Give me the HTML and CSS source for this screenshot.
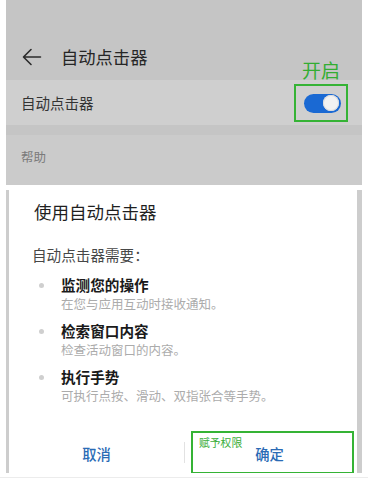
FILE: index.html
```html
<!DOCTYPE html>
<html lang="zh-CN">
<head>
<meta charset="utf-8">
<link rel="stylesheet" href="styles.css">
</head>
<body>
<div class="screen">
  <div class="appbar">
    <svg class="back" width="20" height="18" viewBox="0 0 20 18">
      <path d="M18.5 9H2M9 1.5L1.5 9L9 16.5" fill="none" stroke="#2b2b2b" stroke-width="1.6" stroke-linecap="round" stroke-linejoin="round"/>
    </svg>
    <span class="apptitle">自动点击器</span>
  </div>
  <div class="row">
    <span class="rowtext">自动点击器</span>
    <div class="mark">
      <span class="mark-label">开启</span>
      <div class="toggle"><div class="knob"></div></div>
    </div>
  </div>
  <div class="gap"></div>
  <div class="help">帮助</div>
</div>
<div class="dialog">
  <div class="dtitle">使用自动点击器</div>
  <div class="dbody">自动点击器需要：</div>
  <div class="items">
    <div class="item">
      <div class="dotcell"><span class="dot"></span></div>
      <div class="itext">
        <div class="ititle">监测您的操作</div>
        <div class="isub">在您与应用互动时接收通知。</div>
      </div>
    </div>
    <div class="item">
      <div class="dotcell"><span class="dot"></span></div>
      <div class="itext">
        <div class="ititle">检索窗口内容</div>
        <div class="isub">检查活动窗口的内容。</div>
      </div>
    </div>
    <div class="item">
      <div class="dotcell"><span class="dot"></span></div>
      <div class="itext">
        <div class="ititle">执行手势</div>
        <div class="isub">可执行点按、滑动、双指张合等手势。</div>
      </div>
    </div>
  </div>
  <div class="buttons">
    <div class="btn">取消</div>
    <div class="divider"></div>
    <div class="btn ok">
      <div class="okmark"><span class="okmark-label">赋予权限</span></div>
      确定
    </div>
  </div>
</div>
<div class="footline"></div>
</body>
</html>
```

FILE: styles.css
```css
* { box-sizing: border-box; }
html, body { margin: 0; padding: 0; }
body {
  width: 368px;
  height: 480px;
  background: #ffffff;
  font-family: "Noto Sans CJK SC", "Noto Sans", sans-serif;
  overflow: hidden;
}
.screen {
  margin: 0 6px;
}
.appbar {
  height: 80px;
  background: #c5c5c5;
  display: flex;
  align-items: flex-start;
  padding-top: 45px;
  padding-left: 16px;
}
.back {
  margin-top: 3px;
  flex: none;
}
.apptitle {
  margin-left: 19px;
  font-size: 17.3px;
  line-height: 24px;
  color: #262626;
  font-weight: 400;
}
.row {
  height: 45px;
  background: #cfcfcf;
  display: flex;
  align-items: center;
  justify-content: space-between;
  padding: 0 14px 0 15px;
}
.rowtext {
  font-size: 14.5px;
  line-height: 20px;
  color: #333;
}
.mark {
  position: relative;
  width: 54px;
  height: 38px;
  margin-top: 1px;
  border: 2px solid #35b335;
  display: flex;
  align-items: center;
  justify-content: center;
}
.mark-label {
  position: absolute;
  left: 6px;
  top: -26px;
  font-size: 19px;
  line-height: 20px;
  color: #33ad33;
  white-space: nowrap;
}
.toggle {
  width: 37px;
  height: 19px;
  border-radius: 10px;
  background: #1a69d3;
  display: flex;
  align-items: center;
  justify-content: flex-end;
  padding-right: 2px;
  margin-left: 2px;
}
.knob {
  width: 16px;
  height: 16px;
  border-radius: 50%;
  background: #f2f2f2;
  box-shadow: inset 0 0 0 1px #dcdcdc;
}
.gap {
  height: 10px;
  background: #c5c5c5;
}
.help {
  height: 50px;
  background: #cbcbcb;
  padding: 12px 0 0 15px;
  font-size: 12.5px;
  line-height: 20px;
  color: #7a7a7a;
}
.dialog {
  margin: 5px 6px 0 6px;
  height: 283px;
  background: #fff;
  border-left: 3px solid #cdcdcd;
  border-right: 5px solid #cdcdcd;
  display: flex;
  flex-direction: column;
}
.dtitle {
  padding: 10px 0 0 25px;
  font-size: 17.5px;
  line-height: 24px;
  color: #1f1f1f;
  font-weight: 400;
}
.dbody {
  margin-top: 21px;
  padding-left: 23px;
  font-size: 14.6px;
  line-height: 20px;
  color: #474747;
}
.items {
  margin-top: 10px;
  display: flex;
  flex-direction: column;
  gap: 8px;
}
.item {
  display: grid;
  grid-template-columns: 22px 1fr;
  padding-left: 30px;
}
.dotcell {
  height: 20px;
  display: flex;
  align-items: center;
}
.dot {
  width: 5px;
  height: 5px;
  border-radius: 50%;
  background: #cfcfcf;
}
.ititle {
  font-size: 14.6px;
  line-height: 20px;
  font-weight: 700;
  color: #1a1a1a;
}
.isub {
  font-size: 12.5px;
  line-height: 18px;
  color: #ababab;
}
.buttons {
  margin-top: auto;
  height: 42px;
  display: flex;
  align-items: center;
  padding-right: 3px;
}
.btn {
  flex: 1;
  height: 42px;
  display: flex;
  align-items: center;
  justify-content: center;
  font-size: 14.3px;
  font-weight: 500;
  color: #2a6bb5;
  padding-top: 2px;
}
.btn:first-child {
  flex: 0 0 175px;
}
.divider {
  width: 1px;
  height: 21px;
  background: #e2e2e2;
  flex: none;
}
.ok {
  position: relative;
}
.okmark {
  position: absolute;
  left: 6px;
  right: 0;
  top: 0;
  bottom: 0;
  border: 2px solid #35b335;
  border-bottom-width: 1px;
}
.okmark-label {
  position: absolute;
  left: 6px;
  top: 2px;
  font-size: 10.8px;
  line-height: 14px;
  font-weight: 400;
  color: #3aae3a;
}
.footline {
  margin-top: 4px;
  height: 1px;
  background: #ececec;
}
```
